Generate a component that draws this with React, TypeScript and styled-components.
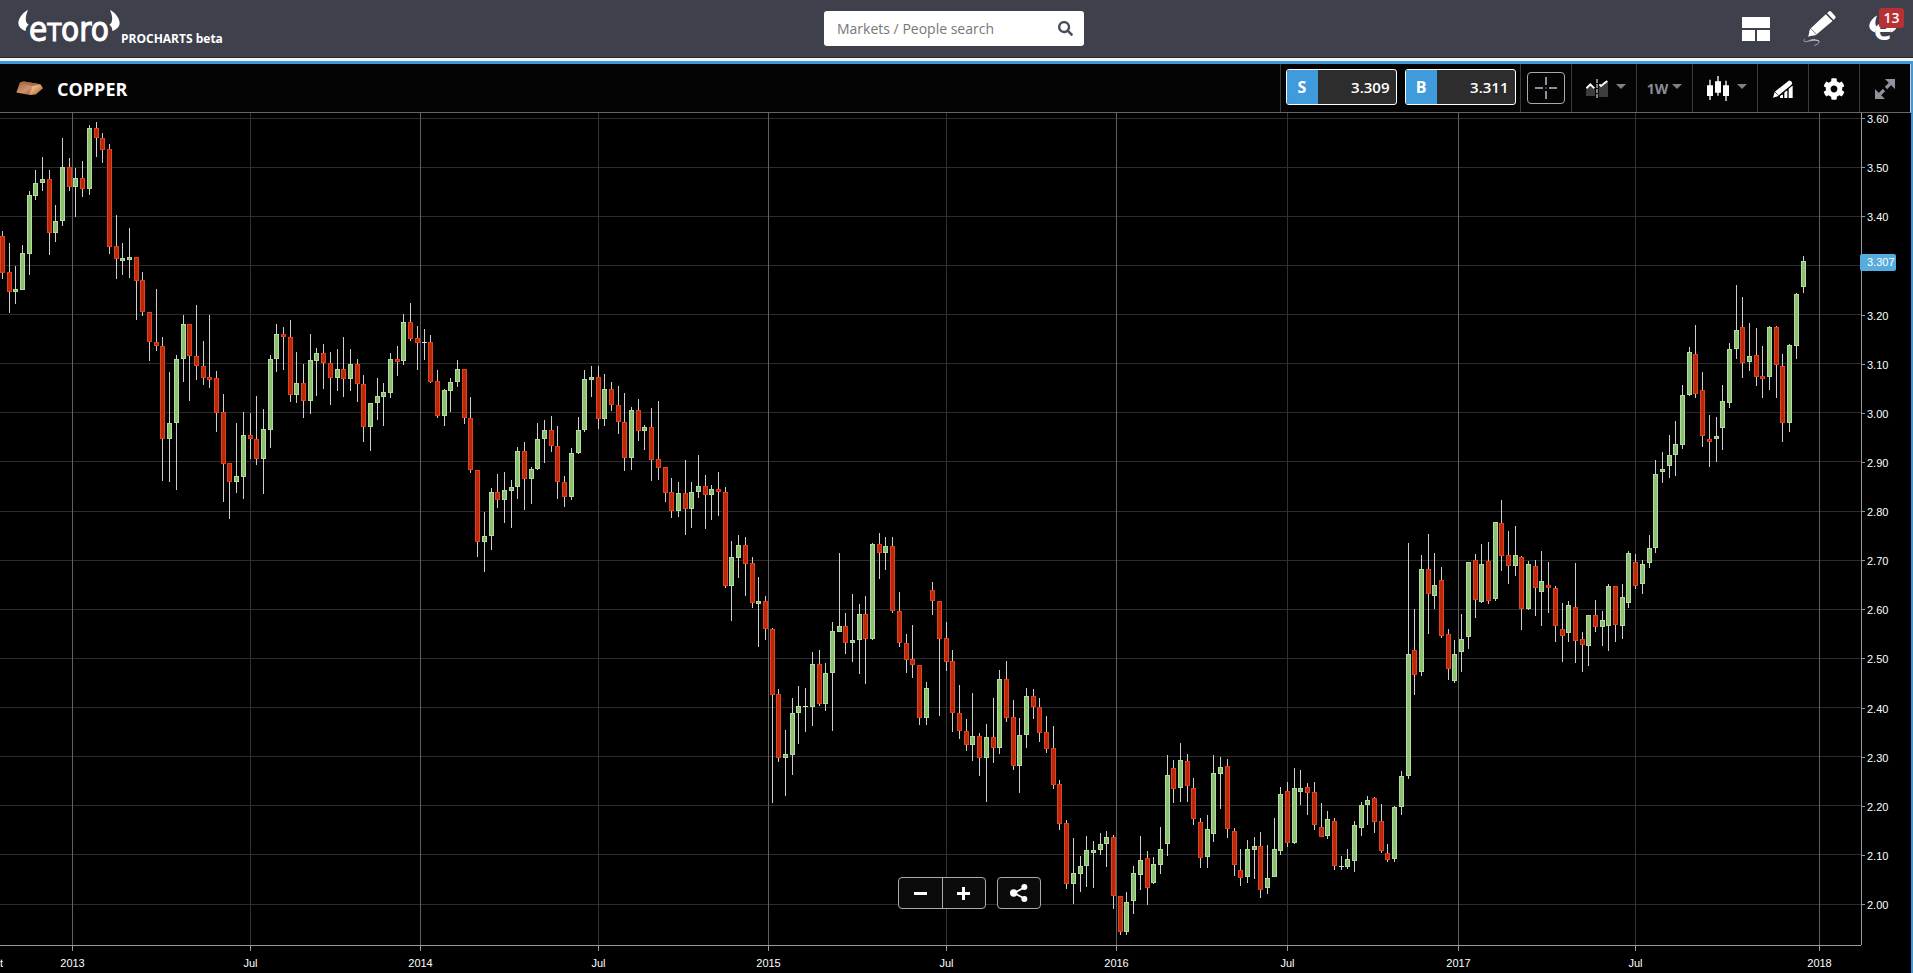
import React from "react";
import styled, { createGlobalStyle } from "styled-components";
import { FaCog, FaSearch } from "react-icons/fa";

/* ---------- market data ---------- */

type Direction = "up" | "down" | "flat";
type Candle = [high: number, top: number, bottom: number, low: number, direction: Direction];

const U: Direction = "up";
const D: Direction = "down";
const N: Direction = "flat";

/* One entry per week: wick top, body top, body bottom, wick bottom. */
const candles: Candle[] = [
  [121, 126, 163, 169, D], [133, 162, 182, 203, D], [156, 179, 182, 194, U], [135, 143, 180, 180, U],
  [81, 85, 144, 165, U], [60, 73, 86, 90, U], [47, 69, 73, 81, U], [60, 69, 123, 145, D],
  [95, 111, 123, 132, U], [28, 57, 111, 116, U], [48, 57, 77, 81, D], [58, 68, 77, 107, U],
  [51, 68, 79, 87, D], [15, 18, 79, 85, U], [12, 18, 28, 47, D], [23, 28, 40, 53, D],
  [34, 39, 137, 144, D], [105, 136, 149, 169, D], [133, 148, 151, 165, U], [118, 147, 150, 168, U],
  [147, 147, 171, 210, D], [162, 170, 202, 206, D], [202, 202, 232, 251, D], [179, 232, 236, 241, D],
  [227, 236, 329, 371, D], [262, 313, 329, 372, U], [245, 249, 313, 380, U], [205, 214, 249, 272, U],
  [214, 214, 246, 291, D], [195, 246, 256, 270, D], [231, 256, 268, 275, D], [205, 267, 270, 278, D],
  [261, 268, 303, 322, D], [284, 302, 354, 392, D], [353, 353, 372, 409, D], [313, 366, 372, 383, U],
  [302, 325, 367, 389, U], [303, 325, 329, 349, D], [286, 329, 349, 355, D], [299, 319, 349, 384, U],
  [245, 249, 320, 338, U], [214, 224, 249, 262, U], [217, 224, 227, 260, D], [210, 227, 285, 292, D],
  [242, 273, 285, 293, U], [254, 273, 291, 308, D], [224, 250, 291, 304, U], [238, 243, 251, 286, U],
  [234, 243, 253, 279, D], [242, 253, 268, 295, D], [239, 259, 268, 281, U], [227, 259, 269, 287, D],
  [239, 254, 269, 281, U], [249, 254, 274, 292, D], [265, 274, 317, 332, D], [293, 293, 317, 341, U],
  [268, 286, 293, 310, U], [273, 282, 287, 316, U], [243, 249, 283, 288, U], [236, 249, 252, 266, D],
  [204, 212, 251, 255, U], [193, 212, 229, 231, D], [216, 228, 233, 260, D], [219, 232, 233, 250, N],
  [225, 232, 272, 273, D], [260, 271, 306, 308, D], [279, 280, 306, 316, U], [268, 272, 281, 302, U],
  [250, 259, 272, 277, U], [259, 259, 308, 314, D], [287, 308, 360, 363, D], [360, 360, 432, 447, D],
  [402, 426, 432, 462, U], [378, 382, 426, 440, U], [364, 382, 390, 398, D], [362, 380, 390, 413, U],
  [370, 377, 381, 418, U], [337, 341, 377, 389, U], [332, 341, 369, 400, D], [357, 359, 369, 394, U],
  [313, 329, 359, 360, U], [310, 320, 329, 353, U], [306, 320, 336, 342, D], [316, 336, 372, 389, D],
  [366, 372, 387, 397, D], [338, 343, 387, 390, U], [307, 320, 343, 344, U], [260, 269, 320, 322, U],
  [256, 267, 270, 287, U], [256, 267, 309, 319, D], [264, 279, 309, 316, U], [272, 279, 295, 301, D],
  [276, 295, 312, 324, D], [283, 312, 348, 361, D], [297, 300, 348, 360, U], [289, 300, 321, 331, D],
  [315, 317, 321, 340, U], [298, 317, 350, 371, D], [291, 349, 358, 370, D], [357, 357, 383, 392, D],
  [368, 382, 401, 408, D], [372, 383, 401, 407, U], [350, 383, 399, 425, D], [372, 382, 399, 418, U],
  [345, 376, 382, 388, U], [365, 376, 385, 419, D], [375, 379, 385, 410, U], [362, 379, 382, 406, D],
  [377, 382, 476, 478, D], [431, 447, 476, 511, U], [425, 435, 448, 468, U], [427, 435, 454, 486, D],
  [447, 453, 493, 498, D], [467, 491, 494, 537, U], [486, 491, 519, 530, D], [518, 519, 585, 693, D],
  [579, 584, 648, 652, D], [620, 644, 648, 686, U], [588, 603, 645, 665, U], [576, 596, 603, 634, U],
  [578, 596, 597, 622, N], [542, 554, 597, 616, U], [540, 554, 594, 596, D], [553, 563, 594, 601, U],
  [512, 521, 563, 621, U], [443, 516, 522, 522, U], [503, 516, 533, 544, D], [484, 530, 533, 552, U],
  [494, 504, 530, 564, U], [486, 504, 529, 574, D], [433, 434, 529, 530, U], [423, 434, 443, 469, D],
  [427, 436, 443, 460, U], [427, 436, 501, 503, D], [482, 501, 533, 537, D], [524, 533, 550, 563, D],
  [515, 549, 555, 568, D], [555, 555, 608, 615, D], [572, 578, 608, 615, U], [472, 480, 491, 505, D],
  [491, 491, 529, 606, D], [512, 528, 552, 561, D], [540, 551, 603, 622, D], [575, 603, 621, 629, D],
  [609, 621, 635, 641, D], [583, 626, 635, 651, U], [623, 626, 648, 666, D], [614, 627, 648, 692, U],
  [588, 627, 638, 653, D], [560, 569, 638, 644, U], [551, 569, 608, 612, D], [590, 607, 656, 660, D],
  [608, 625, 656, 683, U], [578, 586, 625, 638, U], [579, 586, 597, 609, D], [588, 597, 623, 632, D],
  [606, 622, 639, 643, D], [616, 638, 675, 679, D], [670, 674, 714, 720, D], [710, 713, 774, 779, D],
  [728, 763, 774, 794, U], [746, 756, 764, 782, U], [726, 740, 756, 777, U], [731, 740, 743, 778, U],
  [723, 734, 740, 745, U], [721, 727, 734, 757, U], [725, 727, 786, 799, D], [786, 786, 822, 825, D],
  [782, 792, 822, 825, U], [756, 763, 791, 804, U], [726, 750, 765, 780, U], [741, 748, 778, 795, D],
  [747, 754, 773, 774, U], [717, 739, 755, 764, U], [645, 665, 734, 746, U], [650, 658, 679, 693, D],
  [633, 650, 678, 692, U], [644, 651, 676, 692, D], [668, 678, 709, 715, D], [708, 712, 748, 758, D],
  [705, 719, 747, 758, U], [645, 663, 724, 732, U], [647, 657, 664, 699, U], [649, 656, 719, 728, D],
  [718, 721, 755, 766, D], [739, 760, 768, 776, D], [730, 739, 767, 773, U], [727, 736, 740, 769, U],
  [722, 736, 780, 788, D], [735, 768, 778, 784, U], [708, 739, 767, 767, U], [677, 684, 741, 745, U],
  [672, 681, 733, 737, D], [658, 678, 733, 734, U], [660, 678, 682, 695, U], [673, 677, 683, 705, D],
  [672, 682, 715, 720, D], [693, 717, 727, 727, D], [701, 709, 726, 729, U], [708, 711, 756, 760, D],
  [746, 756, 757, 760, N], [739, 749, 757, 759, U], [711, 715, 751, 762, U], [692, 695, 718, 726, U],
  [686, 690, 695, 715, U], [687, 688, 712, 723, D], [694, 711, 741, 743, D], [734, 743, 750, 752, D],
  [696, 697, 749, 752, U], [661, 666, 697, 705, U], [433, 544, 666, 669, U], [499, 540, 565, 585, D],
  [445, 459, 562, 566, U], [424, 459, 484, 524, D], [443, 475, 486, 499, U], [457, 470, 526, 528, D],
  [519, 524, 559, 570, D], [530, 544, 571, 573, U], [504, 529, 542, 562, U], [452, 452, 527, 539, U],
  [444, 450, 490, 508, D], [434, 454, 492, 493, U], [432, 451, 491, 494, D], [412, 412, 489, 491, U],
  [390, 413, 446, 461, D], [421, 445, 456, 474, D], [416, 445, 456, 466, U], [446, 447, 499, 520, D],
  [451, 454, 499, 500, U], [450, 456, 478, 506, D], [441, 471, 482, 516, U], [452, 475, 478, 503, D],
  [476, 478, 516, 532, D], [493, 519, 526, 552, D], [491, 495, 523, 532, U], [453, 497, 531, 553, D],
  [522, 529, 535, 562, D], [505, 505, 536, 556, U], [490, 505, 517, 522, D], [501, 510, 517, 536, U],
  [474, 476, 516, 541, U], [476, 476, 515, 532, D], [474, 487, 516, 529, U], [441, 443, 493, 498, U],
  [444, 452, 476, 479, D], [450, 454, 474, 484, U], [425, 438, 453, 458, U], [350, 364, 438, 443, U],
  [342, 359, 362, 373, U], [325, 345, 356, 368, U], [311, 334, 345, 366, U], [275, 285, 335, 339, U],
  [237, 242, 285, 286, U], [215, 244, 284, 288, D], [262, 280, 326, 337, D], [305, 329, 332, 357, D],
  [307, 326, 329, 352, U], [275, 291, 318, 340, U], [233, 239, 293, 298, U], [175, 220, 239, 249, U],
  [187, 217, 253, 268, D], [213, 246, 252, 261, U], [218, 245, 267, 276, D], [236, 266, 269, 288, D],
  [216, 217, 267, 280, U], [216, 217, 255, 288, D], [244, 256, 313, 332, D], [234, 235, 313, 322, U],
  [183, 184, 236, 249, U], [146, 151, 177, 183, U],
];

const PLOT = { top: 3, width: 1861, height: 832 };
const PRICE_STEP = 49.125;
const FIRST_LEVEL = 8;
const WEEK = 6.694;
const FIRST_WEEK = 2.34;

const lastPrice = 3.307;
const prices = Array.from({ length: 17 }, (_, i) => 3.6 - i * 0.1);

/* A level whose label would sit under the last price tag stays blank. */
const isCovered = (price: number) => Math.abs(price - lastPrice) < 0.02;

/* Distance of each time mark from the one before it. */
const timeMarks = [
  { label: "Oct", span: 0 },
  { label: "2013", span: 78 },
  { label: "Jul", span: 178 },
  { label: "2014", span: 170 },
  { label: "Jul", span: 178 },
  { label: "2015", span: 170 },
  { label: "Jul", span: 178 },
  { label: "2016", span: 170 },
  { label: "Jul", span: 171 },
  { label: "2017", span: 171 },
  { label: "Jul", span: 177 },
  { label: "2018", span: 184 },
];
const TIME_START = -6;
const TIME_TAIL = 42;

const timeLines = timeMarks.reduce<{ label: string; x: number }[]>((list, mark) => {
  const previous = list.length ? list[list.length - 1].x : TIME_START;
  return [...list, { label: mark.label, x: previous + mark.span }];
}, []);

const candleColors: Record<Direction, { edge: string; fill: string }> = {
  up: { edge: "#b4dba0", fill: "#8cc071" },
  down: { edge: "#e8401c", fill: "#b62a0c" },
  flat: { edge: "#dddddd", fill: "#dddddd" },
};

/* ---------- shared styles ---------- */

const GlobalStyle = createGlobalStyle`
  *, *::before, *::after { box-sizing: border-box; }
  body { margin: 0; background: #000; color: #fff; font-family: "Open Sans", "Noto Sans", sans-serif; }
  button, input { font: inherit; }
`;

const Page = styled.div`
  display: flex;
  flex-direction: column;
  min-height: 100vh;
  overflow: hidden;
`;

const PlainButton = styled.button`
  display: flex;
  align-items: center;
  justify-content: center;
  padding: 0;
  border: 0;
  background: none;
  color: #fff;
  cursor: pointer;
`;

/* ---------- top bar ---------- */

const TopBar = styled.header`
  display: grid;
  grid-template-columns: 1fr 260px 1fr;
  align-items: center;
  height: 58px;
  padding: 0 9px 0 4px;
  background: #3e404c;
  border-bottom: 1px solid #2a262c;
`;

const Brand = styled.a`
  display: flex;
  align-items: flex-start;
  justify-self: start;
  height: 37px;
  padding-left: 14px;
  color: #fff;
  text-decoration: none;
`;

const Wordmark = styled.span`
  display: flex;
  align-items: baseline;
  justify-content: center;
  width: 80px;
  font-family: "DejaVu Sans Condensed", "DejaVu Sans", sans-serif;
  font-stretch: condensed;
  font-size: 33px;
  line-height: 40px;
  -webkit-text-stroke: 1px #fff;
`;

const SmallCap = styled.span`
  font-size: 25px;
`;

const Product = styled.span`
  padding: 17px 0 0 1px;
  font-size: 12px;
  font-weight: 700;
  line-height: 24px;
`;

const SearchForm = styled.form`
  display: flex;
  align-items: center;
  height: 35px;
  padding: 0 11px 0 13px;
  border-radius: 3px;
  background: #fff;
`;

const SearchInput = styled.input`
  flex: 1;
  min-width: 0;
  padding: 0;
  border: 0;
  outline: 0;
  background: none;
  color: #555;
  font-size: 14px;
  &::placeholder { color: #777; opacity: 1; }
`;

const SearchButton = styled(PlainButton)`
  color: #4a4e59;
`;

const TopActions = styled.nav`
  display: flex;
  align-items: center;
  justify-self: end;
  gap: 33px;
`;

const Account = styled(PlainButton)`
  position: relative;
`;

const AccountMark = styled.span`
  display: flex;
  align-items: flex-start;
  width: 35px;
  height: 27px;
`;

const AccountLetter = styled.span`
  margin: 2px -4px 0;
  font-size: 30px;
  font-weight: 700;
  line-height: 24px;
`;

const Badge = styled.span`
  position: absolute;
  top: -7px;
  right: 0;
  width: 25px;
  border-radius: 3px;
  background: #b73033;
  font-size: 14px;
  font-weight: 600;
  line-height: 20px;
`;

/* ---------- instrument bar ---------- */

const Panel = styled.main`
  flex: 1;
  display: flex;
  flex-direction: column;
  margin-top: 3px;
  border-top: 3px solid #3c99dc;
  border-right: 2px solid #3c99dc;
  background: #000;
  box-shadow: 0 -3px #f4f4f4;
`;

const Toolbar = styled.div`
  display: flex;
  height: 49px;
  background: #040404;
  border-bottom: 1px solid #666;
  border-right: 1px solid #ccc;
`;

const Instrument = styled.h1`
  flex: 1;
  display: flex;
  align-items: center;
  gap: 14px;
  margin: 0;
  padding: 1px 0 0 16px;
  font-size: 18px;
  font-weight: 700;
`;

const ToolGroup = styled.div<{ $width: number; $gap?: number }>`
  display: flex;
  align-items: flex-start;
  justify-content: center;
  gap: ${(p) => p.$gap ?? 0}px;
  width: ${(p) => p.$width}px;
  border-left: 1px solid #3a3a3a;
`;

const QuoteButton = styled.button`
  display: flex;
  align-items: stretch;
  width: 111px;
  height: 36px;
  margin-top: 5px;
  padding: 0;
  border: 1px solid #fff;
  border-radius: 3px;
  overflow: hidden;
  background: #2d2d2d;
  color: #fff;
  font-size: 15px;
  font-weight: 600;
  line-height: 34px;
  cursor: pointer;
`;

const QuoteSide = styled.span`
  width: 31px;
  background: #3f9bdc;
  font-size: 16px;
  font-weight: 700;
`;

const QuotePrice = styled.span`
  flex: 1;
  padding-right: 6px;
  text-align: right;
`;

const CrosshairButton = styled(PlainButton)`
  width: 38px;
  height: 32px;
  margin-top: 8px;
  border: 1px solid #aaa;
  border-radius: 4px;
`;

const ToolButton = styled(PlainButton)<{ $muted?: boolean; $menu?: boolean }>`
  width: 100%;
  height: 48px;
  gap: 7px;
  padding: 1px 0 0 ${(p) => (p.$menu ? 4 : 0)}px;
  color: ${(p) => (p.$muted ? "#8a8c95" : "#fff")};
  font-size: 14px;
  font-weight: 700;
`;

const Caret = styled.span<{ $near?: boolean }>`
  margin: -4px 0 0 ${(p) => (p.$near ? -3 : 1)}px;
  border: 5px solid transparent;
  border-top-color: #7e808a;
  border-bottom: 0;
`;

/* ---------- chart ---------- */

const Chart = styled.section`
  position: relative;
  flex: 1;
  display: grid;
  grid-template-columns: 1fr 50px;
  grid-template-rows: minmax(0, 1fr) 28px;
  font-family: "Liberation Sans", Arial, sans-serif;
  font-size: 11px;
  overflow: hidden;
`;

const Plot = styled.div`
  min-height: 0;
  height: calc(100vh - 141px);
`;

const PlotSvg = styled.svg`
  display: block;
  width: 100%;
  height: 100%;
`;

const PriceAxis = styled.div`
  position: relative;
  display: flex;
  flex-direction: column;
  justify-content: space-between;
  padding: 1px 0 35px;
  border-left: 1px solid #999;
`;

const PriceLabel = styled.span<{ $blank: boolean }>`
  display: flex;
  align-items: center;
  gap: 2px;
  height: 10px;
  line-height: 10px;
  &::before {
    content: "";
    width: 3px;
    height: 1px;
    margin-top: -1px;
    background: ${(p) => (p.$blank ? "none" : "#999")};
  }
`;

const PriceTag = styled.output`
  position: absolute;
  left: -2px;
  width: 36px;
  padding-left: 7px;
  border-radius: 2px;
  background: #55acdd;
  line-height: 17px;
`;

const TimeAxis = styled.div`
  display: flex;
  border-top: 1px solid #999;
`;

const TimeStart = styled.div`
  width: 0;
  margin-left: -6px;
`;

const TimeSlot = styled.div<{ $span: number }>`
  flex: ${(p) => p.$span} 0 0;
  display: flex;
  justify-content: flex-end;
`;

const TimeLabel = styled.span`
  display: flex;
  flex-direction: column;
  align-items: center;
  gap: 5px;
  width: 1px;
  margin-right: -1px;
  white-space: nowrap;
  line-height: 14px;
  &::before {
    content: "";
    flex: none;
    width: 1px;
    height: 5px;
    background: #999;
  }
`;

const ChartControls = styled.div`
  position: absolute;
  left: 47%;
  bottom: 64px;
  display: flex;
  gap: 11px;
`;

const ControlGroup = styled.div<{ $width: number }>`
  display: flex;
  width: ${(p) => p.$width}px;
  height: 32px;
  border: 1px solid #aaa;
  border-radius: 4px;
  background: #0b0b0b;
`;

const ControlButton = styled(PlainButton)`
  flex: 1;
  & + & {
    border-left: 1px solid #aaa;
  }
`;

/* ---------- drawings ---------- */

const Horn = ({ flip, small }: { flip?: boolean; small?: boolean }) => (
  <svg width={small ? 9 : 11} height={small ? 18 : 21} viewBox="0 0 33 63" aria-hidden="true">
    <path
      transform={flip ? "translate(33 0) scale(-1 1)" : undefined}
      fill="#fff"
      d="M30 0C18 5 2 22 1 38c0 13 10 20 22 25c0-9 3-15 9-19c-10-5-12-22-2-44z"
    />
  </svg>
);

const Ingot = () => (
  <svg width="27" height="15" viewBox="0 0 82 44" aria-hidden="true">
    <defs>
      <linearGradient id="ingotSide" x1="0" x2="1" y1="0" y2="1">
        <stop offset="0" stopColor="#9a6040" />
        <stop offset=".5" stopColor="#d3936b" />
        <stop offset="1" stopColor="#7a4a2e" />
      </linearGradient>
      <linearGradient id="ingotEnd" x1="0" x2="1" y1="0" y2="1">
        <stop offset="0" stopColor="#ffe0b4" />
        <stop offset=".5" stopColor="#dc9d66" />
        <stop offset="1" stopColor="#8f5a32" />
      </linearGradient>
    </defs>
    <path d="M1 34L12 3l12-2l50 8l-22 7l-10 26z" fill="url(#ingotSide)" />
    <path d="M12 3l12-2l50 8l-24 6z" fill="#a86d4c" />
    <path d="M40 42l10-27l24-6l8 12l-22 19z" fill="url(#ingotEnd)" />
  </svg>
);

const LayoutIcon = () => (
  <svg width="28" height="24" viewBox="0 0 28 24" fill="#fff" aria-hidden="true">
    <rect width="28" height="11" />
    <rect y="13" width="13" height="11" />
    <rect x="15" y="13" width="13" height="11" />
  </svg>
);

const PencilIcon = () => (
  <svg width="33" height="35" viewBox="0 0 98 105" fill="#fff" aria-hidden="true">
    <path d="M76 2c3-3 6-2 9 1l10 11c3 3 3 6 0 9l-4 4l-19-20z" />
    <path d="M68 10l20 20L39 71c-5 3-11 4-14 3l-10 3l3-12c0-4 1-8 5-13z" />
    <path d="M23 53l17 17" stroke="#3e404c" strokeWidth="2" />
    <path d="M70 8l20 20" stroke="#3e404c" strokeWidth="2" />
    <path
      d="M5 84C-2 90 3 94 18 90c17-4 31-4 30 3c-1 5-8 9-15 10"
      fill="none"
      stroke="#d5d5d8"
      strokeWidth="2"
    />
    <path d="M14 89c14-7 34-3 34 3c-4-4-18-5-34-3z" />
  </svg>
);

const CrosshairIcon = () => (
  <svg width="22" height="22" viewBox="0 0 22 22" stroke="#8b8e9b" strokeWidth="2" aria-hidden="true">
    <path d="M11 0v8M11 14v8M0 11h8M14 11h8" />
    <path d="M10 11h2" stroke="#777" strokeWidth="1" />
  </svg>
);

const CompareIcon = () => (
  <svg width="22" height="19" viewBox="0 0 66 57" aria-hidden="true">
    <path d="M0 33L13 18l14 15v18H0z" fill="#3d3d3d" />
    <path d="M38 24l12-6l16-12v48H38z" fill="#3d3d3d" />
    <path d="M1 28L13 16l12 12" fill="none" stroke="#fff" strokeWidth="6" />
    <path d="M40 16l5 5l10-8l9-7" fill="none" stroke="#fff" strokeWidth="6" />
    <path d="M33 0v57" stroke="#040404" strokeWidth="8" />
    <path d="M33 0v57" stroke="#fff" strokeWidth="3" strokeDasharray="12 3" />
  </svg>
);

const CandlesIcon = () => (
  <svg width="22" height="25" viewBox="0 0 66 75" fill="#fff" aria-hidden="true">
    <path d="M7 11h4v17h7v32h-7v12H7V60H0V28h7z" />
    <path d="M31 0h4v16h7v34h-7v9h-4v-9h-7V16h7z" />
    <path d="M55 14h4v14h7v32h-7v15h-4V60h-7V28h7z" />
  </svg>
);

const DrawIcon = () => (
  <svg width="20" height="18" viewBox="0 0 60 54" fill="#fff" aria-hidden="true">
    <path d="M21 44h9v10h-9zM34 32h9v22h-9zM47 18h12v36H47z" />
    <path d="M0 54L5 33L44 2c6-4 11-2 14 3s1 9-3 12L17 49z" stroke="#040404" strokeWidth="4" />
    <path d="M0 53l5-17l11 12z" />
    <path d="M6 36l11 11" stroke="#040404" strokeWidth="2" />
  </svg>
);

const ExpandIcon = () => (
  <svg width="20" height="20" viewBox="0 0 60 60" fill="#8f919b" aria-hidden="true">
    <path d="M30 0h30v30zM0 30v30h30z" />
    <path d="M46 14L33 27M27 33L14 46" stroke="#8f919b" strokeWidth="10" />
  </svg>
);

const MinusIcon = () => (
  <svg width="13" height="13" viewBox="0 0 13 13" stroke="#fff" strokeWidth="3" aria-hidden="true">
    <path d="M0 6.5h13" />
  </svg>
);

const PlusIcon = () => (
  <svg width="13" height="13" viewBox="0 0 13 13" stroke="#fff" strokeWidth="3" aria-hidden="true">
    <path d="M0 6.5h13M6.5 0v13" />
  </svg>
);

const ShareIcon = () => (
  <svg width="18" height="18" viewBox="0 0 54 54" fill="#fff" aria-hidden="true">
    <path d="M44 10L12 27l32 17" fill="none" stroke="#fff" strokeWidth="5" />
    <circle cx="11" cy="27" r="11" />
    <circle cx="43" cy="9" r="9" />
    <circle cx="43" cy="45" r="9" />
  </svg>
);

/* ---------- composed parts ---------- */

const CandleChart = () => (
  <PlotSvg
    viewBox={`0 ${PLOT.top} ${PLOT.width} ${PLOT.height}`}
    preserveAspectRatio="none"
    shapeRendering="crispEdges"
    role="img"
    aria-label="Copper weekly price chart"
  >
    {prices.map((price, i) => (
      <rect
        key={price}
        x={0}
        y={Math.floor(FIRST_LEVEL + i * PRICE_STEP)}
        width={PLOT.width}
        height={1}
        fill="#2c2c2c"
      />
    ))}
    {timeLines.slice(1).map((line) => (
      <rect
        key={line.x}
        x={line.x}
        y={PLOT.top}
        width={1}
        height={PLOT.height}
        fill={line.label === "Jul" ? "#333333" : "#606060"}
      />
    ))}
    {candles.map(([high, top, bottom, low, direction], i) => {
      const x = Math.floor(FIRST_WEEK + WEEK * i);
      const { edge, fill } = candleColors[direction];
      return (
        <g key={i}>
          <rect x={x} y={high} width={1} height={low - high} fill="#cfcfcf" />
          <rect x={x - 2} y={top} width={5} height={bottom - top} fill={edge} />
          {bottom - top > 2 && (
            <rect x={x - 1} y={top + 1} width={3} height={bottom - top - 2} fill={fill} />
          )}
        </g>
      );
    })}
  </PlotSvg>
);

const Quote = ({ side, price, label }: { side: string; price: string; label: string }) => (
  <QuoteButton type="button" aria-label={label}>
    <QuoteSide>{side}</QuoteSide>
    <QuotePrice>{price}</QuotePrice>
  </QuoteButton>
);

export default function App() {
  const tagLevel = ((3.6 - lastPrice) / 0.1) * PRICE_STEP + FIRST_LEVEL - PLOT.top - 8;

  return (
    <Page>
      <GlobalStyle />
      <TopBar>
        <Brand href="#" aria-label="eToro ProCharts">
          <Horn />
          <Wordmark>
            e<SmallCap>T</SmallCap>oro
          </Wordmark>
          <Horn flip />
          <Product>PROCHARTS beta</Product>
        </Brand>
        <SearchForm role="search">
          <SearchInput type="text" placeholder="Markets / People search" aria-label="Markets / People search" />
          <SearchButton type="submit" aria-label="Search">
            <FaSearch size={15} />
          </SearchButton>
        </SearchForm>
        <TopActions>
          <PlainButton type="button" aria-label="Layout">
            <LayoutIcon />
          </PlainButton>
          <PlainButton type="button" aria-label="Draw">
            <PencilIcon />
          </PlainButton>
          <Account type="button" aria-label="Account">
            <AccountMark>
              <Horn small />
              <AccountLetter>e</AccountLetter>
              <Horn small flip />
            </AccountMark>
            <Badge>13</Badge>
          </Account>
        </TopActions>
      </TopBar>

      <Panel>
        <Toolbar>
          <Instrument>
            <Ingot />
            COPPER
          </Instrument>
          <ToolGroup $width={240} $gap={8}>
            <Quote side="S" price="3.309" label="Sell 3.309" />
            <Quote side="B" price="3.311" label="Buy 3.311" />
          </ToolGroup>
          <ToolGroup $width={51}>
            <CrosshairButton type="button" aria-label="Crosshair">
              <CrosshairIcon />
            </CrosshairButton>
          </ToolGroup>
          <ToolGroup $width={65}>
            <ToolButton type="button" $menu aria-label="Compare">
              <CompareIcon />
              <Caret />
            </ToolButton>
          </ToolGroup>
          <ToolGroup $width={56}>
            <ToolButton type="button" $muted>
              1W
              <Caret $near />
            </ToolButton>
          </ToolGroup>
          <ToolGroup $width={65}>
            <ToolButton type="button" $menu aria-label="Chart type">
              <CandlesIcon />
              <Caret />
            </ToolButton>
          </ToolGroup>
          <ToolGroup $width={51}>
            <ToolButton type="button" aria-label="Indicators">
              <DrawIcon />
            </ToolButton>
          </ToolGroup>
          <ToolGroup $width={51}>
            <ToolButton type="button" aria-label="Settings">
              <FaCog size={22} />
            </ToolButton>
          </ToolGroup>
          <ToolGroup $width={51}>
            <ToolButton type="button" aria-label="Full screen">
              <ExpandIcon />
            </ToolButton>
          </ToolGroup>
        </Toolbar>

        <Chart>
          <Plot>
            <CandleChart />
          </Plot>
          <PriceAxis>
            {prices.map((price) => (
              <PriceLabel key={price} $blank={isCovered(price)}>
                {isCovered(price) ? null : price.toFixed(2)}
              </PriceLabel>
            ))}
            <PriceTag style={{ top: `${(tagLevel / PLOT.height) * 100}%` }}>{lastPrice}</PriceTag>
          </PriceAxis>
          <TimeAxis>
            <TimeStart />
            {timeMarks.map((mark, i) => (
              <TimeSlot key={i} $span={mark.span}>
                <TimeLabel>{mark.label}</TimeLabel>
              </TimeSlot>
            ))}
            <TimeSlot $span={TIME_TAIL} />
          </TimeAxis>
          <ChartControls>
            <ControlGroup $width={88}>
              <ControlButton type="button" aria-label="Zoom out">
                <MinusIcon />
              </ControlButton>
              <ControlButton type="button" aria-label="Zoom in">
                <PlusIcon />
              </ControlButton>
            </ControlGroup>
            <ControlGroup $width={44}>
              <ControlButton type="button" aria-label="Share">
                <ShareIcon />
              </ControlButton>
            </ControlGroup>
          </ChartControls>
        </Chart>
      </Panel>
    </Page>
  );
}
